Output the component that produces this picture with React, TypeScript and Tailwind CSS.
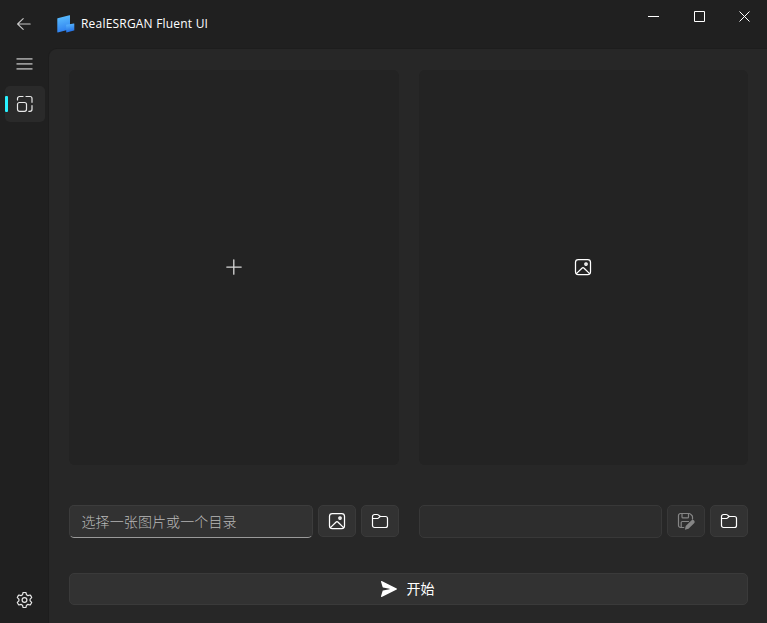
import type { ReactNode } from 'react';

function Icon({ size = 20, className = '', width = 1, children }: { size?: number; className?: string; width?: number; children: ReactNode }) {
  return (
    <svg
      width={size}
      height={size}
      viewBox={`0 0 ${size} ${size}`}
      fill="none"
      stroke="currentColor"
      strokeWidth={width}
      strokeLinecap="round"
      strokeLinejoin="round"
      className={`block shrink-0 ${className}`}
    >
      {children}
    </svg>
  );
}

function ImageIcon() {
  return (
    <Icon width={1.25}>
      <rect x="2.5" y="2.5" width="15" height="15" rx="2.8" />
      <path d="M3.4 16.6 8.9 11.2a1.55 1.55 0 0 1 2.2 0l5.5 5.4" />
      <circle cx="13" cy="7" r="1.25" fill="currentColor" fillOpacity="0.6" />
    </Icon>
  );
}

function FolderIcon() {
  return (
    <Icon width={1.2}>
      <path d="M2.5 5.5a2 2 0 0 1 2-2h2.7c.4 0 .8.15 1.1.4L10.2 5.5h5.3a2 2 0 0 1 2 2v7a2 2 0 0 1-2 2h-11a2 2 0 0 1-2-2z" />
      <path d="M2.5 7.5h4.8c.4 0 .7-.15 1-.4L10.2 5.5" />
    </Icon>
  );
}

function SaveEditIcon() {
  return (
    <Icon width={1.2}>
      <path d="M7.8 16.5H4.5a2 2 0 0 1-2-2v-10a2 2 0 0 1 2-2h8.6c.5 0 1 .2 1.4.6l1.4 1.4c.4.4.6.9.6 1.4v2.2" />
      <path d="M6 2.5v3.4c0 .6.4 1 1 1h4.5c.6 0 1-.4 1-1V2.5M5.2 16.3V11.5c0-.6.4-1 1-1h6.3" />
      <path d="m9.7 15 5.6-5.6a1.9 1.9 0 0 1 2.8 2.8l-5.6 5.6-3.6 1z" fill="currentColor" stroke="none" />
    </Icon>
  );
}

function LogoIcon() {
  return (
    <svg width="18" height="18" viewBox="0 0 18 18" className="block shrink-0">
      <defs>
        <linearGradient id="logo-back" x1="0.3" y1="0" x2="0.5" y2="1">
          <stop offset="0" stopColor="#5cc0ff" />
          <stop offset="1" stopColor="#2d7dee" />
        </linearGradient>
        <linearGradient id="logo-front" x1="0.3" y1="0" x2="0.5" y2="1">
          <stop offset="0" stopColor="#5ab8ff" />
          <stop offset="1" stopColor="#1f6ae0" />
        </linearGradient>
      </defs>
      <path d="M.6 3.3 12.4.2c.3-.1.6.1.6.4v13.6L.8 17.5c-.3.1-.5-.1-.5-.4V3.7c0-.2.1-.3.3-.4z" fill="url(#logo-back)" />
      <path d="m9.5 9.7 7.4-1.2c.2 0 .4.1.4.3v6.4c0 .2-.1.3-.3.4l-7.4 1.8c-.2.1-.4-.1-.4-.3v-7c0-.2.1-.4.3-.4z" fill="url(#logo-front)" />
    </svg>
  );
}

function IconButton({ label, disabled = false, children }: { label: string; disabled?: boolean; children: ReactNode }) {
  return (
    <button
      aria-label={label}
      disabled={disabled}
      className="flex h-8 w-[38px] shrink-0 items-center justify-center rounded-[5px] border border-[#3a3a3a] bg-[#323232] text-white disabled:border-[#383838] disabled:bg-[#2f2f2f] disabled:text-[#858585]"
    >
      {children}
    </button>
  );
}

function TitleBar() {
  return (
    <header className="flex h-12 shrink-0 items-start">
      <button aria-label="Back" className="ml-[4px] flex h-12 w-10 items-center justify-center text-[#c6c6c6]">
        <Icon size={16} width={1.1}>
          <path d="M14.2 8H1.6M7.2 2.6 1.6 8l5.6 5.4" />
        </Icon>
      </button>
      <div className="ml-[13px] flex h-12 items-center">
        <LogoIcon />
        <h1 className="ml-[6px] whitespace-nowrap font-['Open_Sans','Noto_Sans',sans-serif] text-[12px] leading-none tracking-[0.2px] text-white">
          RealESRGAN Fluent UI
        </h1>
      </div>
      <div className="ml-auto flex h-8 text-white">
        <button aria-label="Minimize" className="flex w-[46px] items-center justify-center">
          <svg width="12" height="11" viewBox="0 0 12 11" stroke="currentColor">
            <path d="M1 5.5h11" />
          </svg>
        </button>
        <button aria-label="Maximize" className="flex w-[46px] items-center justify-center">
          <svg width="12" height="12" viewBox="0 0 12 12" fill="none" stroke="currentColor">
            <path d="M1.5 1.5h10v10h-10z" />
          </svg>
        </button>
        <button aria-label="Close" className="flex w-[45px] items-center justify-center">
          <svg width="11" height="11" viewBox="0 0 11 11" stroke="currentColor">
            <path d="m.5.5 10 10m0-10-10 10" />
          </svg>
        </button>
      </div>
    </header>
  );
}

function Sidebar() {
  return (
    <nav className="flex w-12 shrink-0 flex-col pl-[5px]">
      <button aria-label="Menu" className="flex h-8 w-10 items-center pl-[11px] text-[#989898]">
        <svg width="17" height="14" viewBox="0 0 17 14" fill="currentColor">
          <path d="M.5 1h16v1.7H.5zM.5 6h16v1.7H.5zM.5 11h16v1.7H.5z" />
        </svg>
      </button>
      <button aria-label="Upscale" className="mt-1.5 flex h-9 w-10 items-center rounded-[5px] bg-[#2a2a2a] text-[#e8e8e8]">
        <span className="h-4 w-[3px] rounded-[1px] bg-[#29f1ff]" />
        <Icon className="ml-[7px]" width={1.2}>
          <rect x="2.5" y="8.5" width="9" height="8.8" rx="2" />
          <path d="M2.5 6V4.5a2 2 0 0 1 2-2H8M11 2.5H15a2 2 0 0 1 2 2V8.3M17 11.5v3.8a2 2 0 0 1-2 2h-1.2" />
        </Icon>
      </button>
      <button aria-label="Settings" className="mb-[5px] mt-auto flex h-9 w-10 items-center text-[#e8e8e8]">
        <svg
          width="21"
          height="20"
          viewBox="0 0 21 20"
          fill="none"
          stroke="currentColor"
          strokeWidth="1.2"
          strokeLinejoin="round"
          className="ml-[9px] block shrink-0"
        >
          <g transform="translate(.5 0)">
            <path d="M8.5 2.7Q10 2.3 11.5 2.7L12 4.8 13.5 5.6 15.6 5Q16.7 6.1 17.2 7.6L15.6 9.1V10.9L17.2 12.4Q16.7 13.9 15.6 15L13.5 14.4 12 15.2 11.5 17.3Q10 17.7 8.5 17.3L8 15.2 6.5 14.4 4.4 15Q3.3 13.9 2.8 12.4L4.4 10.9V9.1L2.8 7.6Q3.3 6.1 4.4 5L6.5 5.6 8 4.8Z" />
            <circle cx="10" cy="10" r="2.4" />
          </g>
        </svg>
      </button>
    </nav>
  );
}

export default function App() {
  return (
    <div className="flex h-screen w-full flex-col overflow-hidden bg-[#202020] font-['Noto_Sans_CJK_SC',sans-serif]">
      <TitleBar />
      <div className="flex min-h-0 flex-1">
        <Sidebar />
        <main className="flex flex-1 flex-col rounded-tl-[9px] border-l border-t border-[#1d1d1d] bg-[#272727] pl-5 pr-[19px] pt-[21px]">
          <section className="grid grid-cols-[330px_329px] gap-x-5 text-white">
            <div className="flex h-[395px] items-center justify-center rounded-[6px] bg-[#232323] pb-px">
              <Icon width={1.3} className="text-[#d8d8d8]">
                <path d="M9.8 2.8v14.4M2.8 10.1h14.4" />
              </Icon>
            </div>
            <div className="flex h-[395px] items-center justify-center rounded-[6px] bg-[#232323] pb-px pr-px">
              <ImageIcon />
            </div>
          </section>
          <section className="mt-10 grid grid-cols-[330px_329px] gap-x-5">
            <div className="flex gap-[5px]">
              <input
                placeholder="选择一张图片或一个目录"
                className="h-[33px] min-w-0 flex-1 rounded-[5px] border border-[#3c3c3c] border-b-[#9a9a9a] bg-[#323232] pb-[2px] pl-[11.5px] text-[14px] font-light tracking-[0.1px] text-white placeholder:text-[#b8b8b8] placeholder:opacity-100"
              />
              <IconButton label="Choose image">
                <ImageIcon />
              </IconButton>
              <IconButton label="Choose folder">
                <FolderIcon />
              </IconButton>
            </div>
            <div className="flex gap-[5px]">
              <input disabled className="h-[33px] min-w-0 flex-1 rounded-[5px] border border-[#383838] bg-[#2d2d2d] px-[11px]" />
              <IconButton label="Save as" disabled>
                <SaveEditIcon />
              </IconButton>
              <IconButton label="Open output folder">
                <FolderIcon />
              </IconButton>
            </div>
          </section>
          <button className="mt-[35px] flex h-8 w-[679px] items-center justify-center gap-2 rounded-[5px] border border-[#3a3a3a] bg-[#323232] pr-1 text-[14px] text-white">
            <svg width="20" height="20" viewBox="0 0 20 20" fill="currentColor" className="block">
              <path d="M2.7 2.1 17.7 9.5c.4.2.4.8 0 1L2.7 17.9c-.4.2-.8-.2-.7-.6l1.6-5.4c.1-.2.2-.4.4-.4L10.5 10.3c.3-.1.3-.5 0-.6L4 8.5c-.2 0-.4-.2-.4-.4L2 2.7c-.1-.4.3-.8.7-.6z" />
            </svg>
            <span className="pb-[2px] leading-none">开始</span>
          </button>
        </main>
      </div>
    </div>
  );
}
